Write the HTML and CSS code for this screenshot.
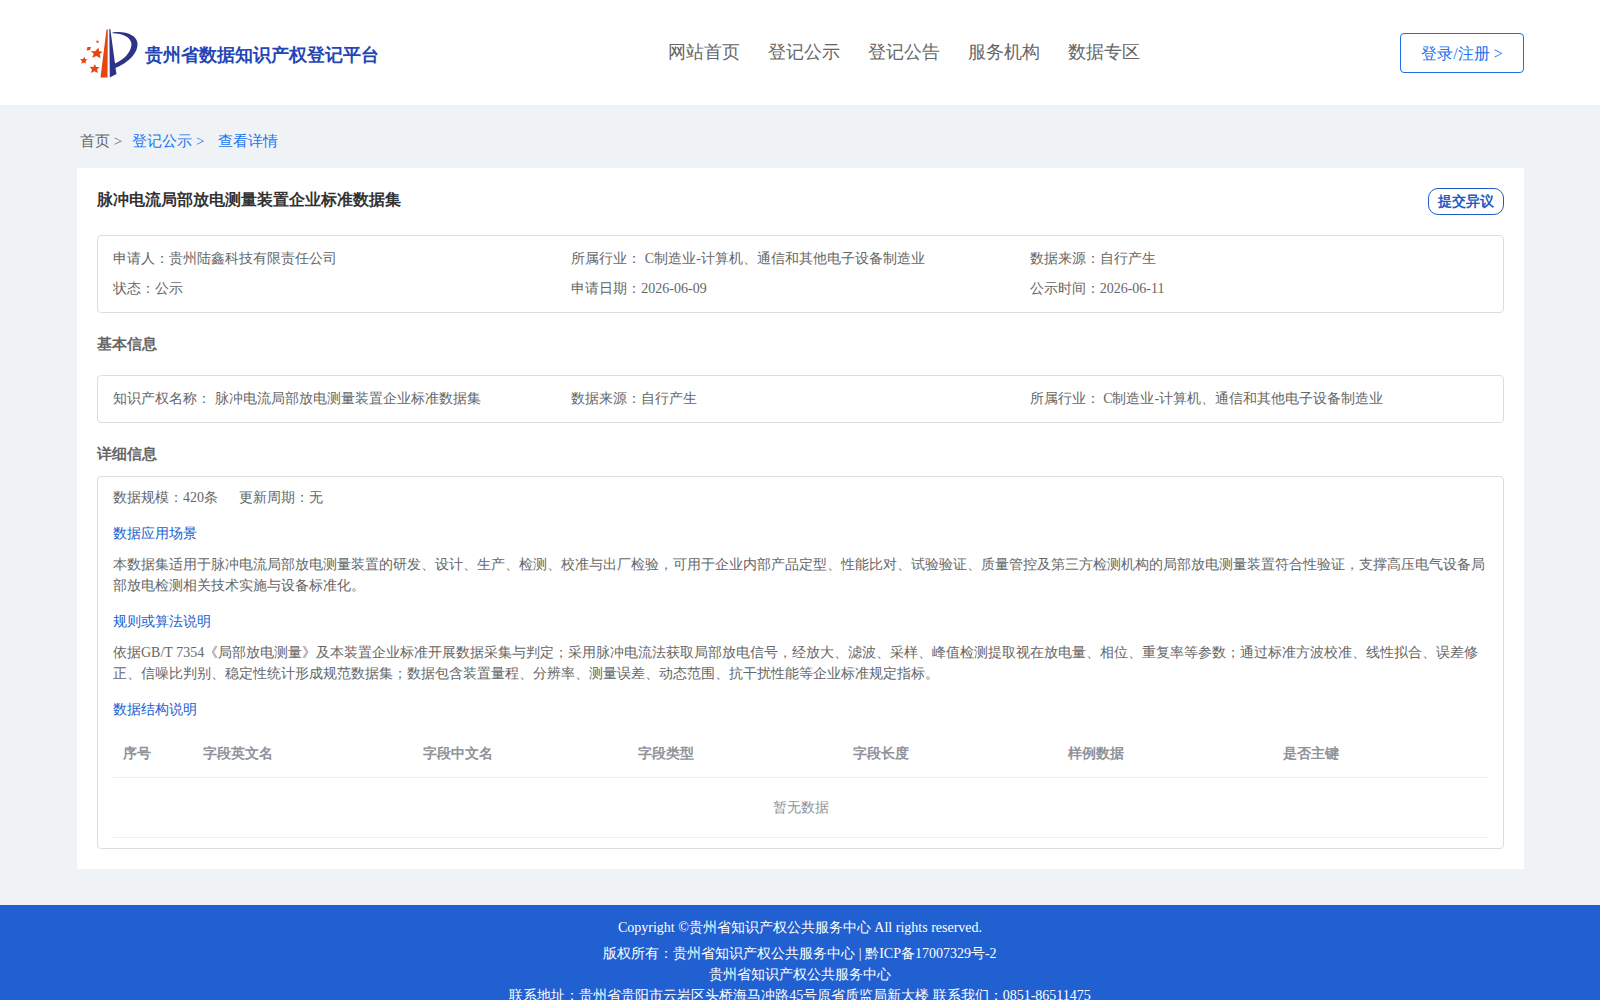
FILE: index.html
```
<!DOCTYPE html>
<html>
<head>
<meta charset="utf-8">
<meta name="viewport" content="width=device-width, initial-scale=1">
<title>贵州省数据知识产权登记平台</title>
<link rel="stylesheet" href="styles.css">
</head>
<body>
<header class="header">
  <a class="brand" href="#">
    <svg class="brand-logo" viewBox="0 0 58 50" aria-hidden="true">
      <path fill="#e64510" d="M26.500 1.500H27.800L27.500 49.500H20.500Z"/>
      <path fill="#2c3389" d="M29.300 1H30.300L35 35.500C43 32 51 25 51.500 16.500C51.500 9 42 5 32.500 5.200V4.500C45 2.500 57.500 7 57.500 16C57.500 27 46 35.500 35.500 40L36.500 46L29.800 49.500Z"/>
      <g fill="#e64510">
        <path d="M18.500 19.500L19 23L22.500 24L19.800 26L20.500 30.200L16.500 28L12 29.800L13.800 26L11 23L15.200 23.300Z"/>
        <path d="M15 36L16 39L19.500 39L17 41.500L18 45L14.500 43.300L10.800 45L12 41.500L9.500 38.800L13.300 39Z"/>
        <path d="M4.500 28.500L5 31L7.500 31.500L5.500 33L6 35.500L3.800 34.500L1.200 35.800L2 33L0 31.200L3 31Z"/>
        <path d="M7.500 19L11 19L10 22L6.500 22.500Z"/>
        <path d="M16.500 12.500L19 13L18 15L16.500 14.500Z"/>
      </g>
    </svg>
    <span class="brand-name">贵州省数据知识产权登记平台</span>
  </a>
  <nav class="nav">
    <a href="#">网站首页</a>
    <a href="#">登记公示</a>
    <a href="#">登记公告</a>
    <a href="#">服务机构</a>
    <a href="#">数据专区</a>
  </nav>
  <button class="login" type="button">登录/注册 &gt;</button>
</header>

<main class="main">
  <nav class="crumbs">
    <a class="crumb-home" href="#">首页 &gt;</a>
    <a href="#">登记公示 &gt;</a>
    <a class="crumb-current" href="#">查看详情</a>
  </nav>

  <article class="panel">
    <div class="panel-head">
      <h1>脉冲电流局部放电测量装置企业标准数据集</h1>
      <button class="objection" type="button">提交异议</button>
    </div>

    <section class="box facts">
      <p>申请人：贵州陆鑫科技有限责任公司</p>
      <p>所属行业： C制造业-计算机、通信和其他电子设备制造业</p>
      <p>数据来源：自行产生</p>
      <p>状态：公示</p>
      <p>申请日期：2026-06-09</p>
      <p>公示时间：2026-06-11</p>
    </section>

    <h2 class="basic-title">基本信息</h2>
    <section class="box facts">
      <p>知识产权名称： 脉冲电流局部放电测量装置企业标准数据集</p>
      <p>数据来源：自行产生</p>
      <p>所属行业： C制造业-计算机、通信和其他电子设备制造业</p>
    </section>

    <h2 class="detail-title">详细信息</h2>
    <section class="box details">
      <p class="scale"><span>数据规模：420条</span><span>更新周期：无</span></p>
      <h3>数据应用场景</h3>
      <p>本数据集适用于脉冲电流局部放电测量装置的研发、设计、生产、检测、校准与出厂检验，可用于企业内部产品定型、性能比对、试验验证、质量管控及第三方检测机构的局部放电测量装置符合性验证，支撑高压电气设备局部放电检测相关技术实施与设备标准化。</p>
      <h3>规则或算法说明</h3>
      <p>依据GB/T 7354《局部放电测量》及本装置企业标准开展数据采集与判定；采用脉冲电流法获取局部放电信号，经放大、滤波、采样、峰值检测提取视在放电量、相位、重复率等参数；通过标准方波校准、线性拟合、误差修正、信噪比判别、稳定性统计形成规范数据集；数据包含装置量程、分辨率、测量误差、动态范围、抗干扰性能等企业标准规定指标。</p>
      <h3>数据结构说明</h3>
      <table class="fields">
        <colgroup><col class="col-index"><col class="col-name"><col><col><col><col><col></colgroup>
        <thead>
          <tr><th>序号</th><th>字段英文名</th><th>字段中文名</th><th>字段类型</th><th>字段长度</th><th>样例数据</th><th>是否主键</th></tr>
        </thead>
        <tbody>
          <tr><td colspan="7">暂无数据</td></tr>
        </tbody>
      </table>
    </section>
  </article>
</main>

<footer class="footer">
  <p class="copyright">Copyright ©贵州省知识产权公共服务中心 All rights reserved.</p>
  <p>版权所有：贵州省知识产权公共服务中心 | 黔ICP备17007329号-2</p>
  <p>贵州省知识产权公共服务中心</p>
  <p>联系地址：贵州省贵阳市云岩区头桥海马冲路45号原省质监局新大楼 联系我们：0851-86511475</p>
</footer>
</body>
</html>
```
FILE: styles.css
```
* {
  box-sizing: border-box;
}

body {
  margin: 0;
  background: #eff3f6;
  color: #666;
  font: 14px/21px "Liberation Serif", serif;
}

h1, h2, h3, p {
  margin: 0;
}

a {
  color: inherit;
  text-decoration: none;
}

button {
  padding: 0;
  background: #fff;
  font-family: inherit;
  cursor: pointer;
}

.header {
  display: flex;
  align-items: center;
  justify-content: space-between;
  height: 105px;
  padding: 0 76px 0 80px;
  background: #fff;
}

.brand {
  display: flex;
  align-items: center;
  gap: 7px;
  color: #2446b5;
}

.brand-logo {
  width: 58px;
  height: 50px;
}

.brand-name {
  padding-top: 4px;
  font-size: 18px;
  font-weight: bold;
  line-height: 26px;
}

.nav {
  display: flex;
  gap: 28px;
  margin-left: 28px;
  padding-bottom: 2px;
  font-size: 18px;
  line-height: 26px;
}

.login {
  width: 124px;
  height: 40px;
  padding-top: 3px;
  border: 1px solid #1a6fe8;
  border-radius: 4px;
  color: #1a73f0;
  font-size: 16px;
}

.main {
  padding: 0 76px 36px 77px;
}

.crumbs {
  display: flex;
  gap: 10px;
  height: 63px;
  padding: 26px 3px 0;
  color: #1a73f0;
  font-size: 15px;
}

.crumb-home {
  color: #666;
}

.crumb-current {
  margin-left: 4px;
}

.panel {
  padding: 20px;
  background: #fff;
}

.panel-head {
  display: flex;
  align-items: flex-start;
  justify-content: space-between;
  height: 47px;
}

h1 {
  color: #333;
  font-size: 16px;
  line-height: 24px;
}

.objection {
  width: 76px;
  height: 27px;
  border: 1px solid #1f5bc4;
  border-radius: 10px;
  color: #1f5bc4;
  font-size: 14px;
  font-weight: bold;
}

.box {
  border: 1px solid #ddd;
  border-radius: 4px;
}

.facts {
  display: grid;
  grid-template-columns: repeat(3, 1fr);
  row-gap: 9px;
  padding: 12px 15px 13px;
}

h2 {
  font-size: 15px;
  line-height: 22px;
}

.basic-title {
  padding: 20px 0;
}

.detail-title {
  padding: 20px 0 11px;
}

.details {
  padding: 10px 15px;
}

.scale {
  display: flex;
  gap: 21px;
}

h3 {
  margin: 15px 0 10px;
  color: #2060d0;
  font-size: 14px;
  font-weight: normal;
}

.fields {
  width: 100%;
  border-spacing: 0;
  table-layout: fixed;
  color: #909399;
}

.col-index {
  width: 80px;
}

.col-name {
  width: 220px;
}

.fields th,
.fields td {
  padding: 0 10px;
  border-bottom: 1px solid #ebeef5;
}

.fields th {
  height: 48px;
  text-align: left;
}

.fields td {
  height: 60px;
  text-align: center;
}

.footer {
  padding: 12px 0;
  background: #2060d0;
  color: #fff;
  text-align: center;
}

.copyright {
  margin-bottom: 5px;
}
```
